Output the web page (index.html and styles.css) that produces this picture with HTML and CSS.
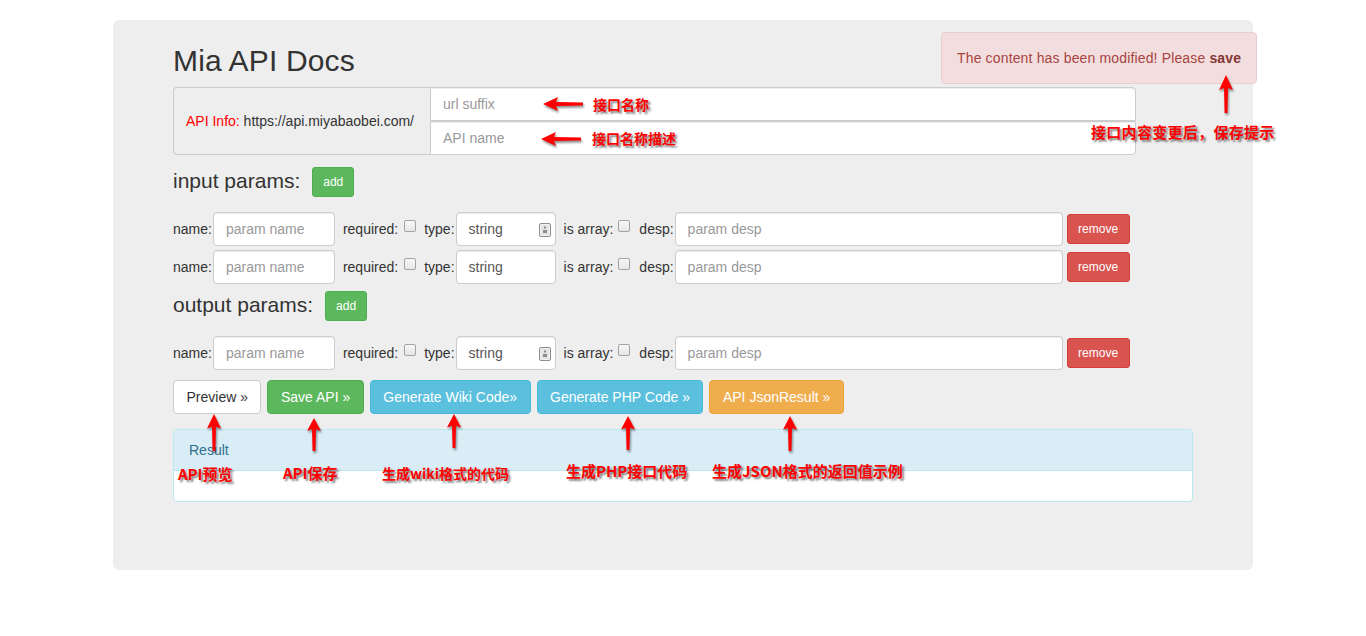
FILE: index.html
```html
<!DOCTYPE html>
<html>
<head>
<meta charset="utf-8">
<title>Mia API Docs</title>
<link rel="stylesheet" href="styles.css">
</head>
<body>
<div class="page">
  <div class="container">
    <div class="jumbotron">
      <h1 class="title">Mia API Docs</h1>
      <div class="info-group">
        <div class="info-addon"><span class="info-label">API Info:</span>&nbsp;https://api.miyabaobei.com/</div>
        <div class="info-fields">
          <input class="field field-top" placeholder="url suffix">
          <input class="field field-bottom" placeholder="API name">
        </div>
      </div>

      <div class="section-head"><h3 class="section-title">input params:</h3><button class="btn btn-sm btn-success">add</button></div>

      <div class="param-row first">
        <span class="lbl">name:</span><input class="form-control name-input" placeholder="param name">
        <span class="lbl lbl-req">required:</span><span class="check check-req"></span>
        <span class="lbl lbl-type">type:</span><div class="form-control type-select"><span>string</span><svg class="sel-icon" width="12" height="14" viewBox="0 0 12 14"><rect x="0.5" y="0.5" width="11" height="13" rx="1.5" fill="#f2f2f2" stroke="#8c8c8c"/><rect x="2" y="2" width="8" height="10" fill="#e4e4e4"/><rect x="5" y="3.5" width="2" height="2" fill="#8c8c8c"/><rect x="4" y="7" width="4" height="3" fill="#8c8c8c"/></svg></div>
        <span class="lbl lbl-arr">is array:</span><span class="check check-arr"></span>
        <span class="lbl lbl-desp">desp:</span><input class="form-control desp-input" placeholder="param desp">
        <button class="btn btn-sm btn-danger remove">remove</button>
      </div>
      <div class="param-row">
        <span class="lbl">name:</span><input class="form-control name-input" placeholder="param name">
        <span class="lbl lbl-req">required:</span><span class="check check-req"></span>
        <span class="lbl lbl-type">type:</span><div class="form-control type-select"><span>string</span></div>
        <span class="lbl lbl-arr">is array:</span><span class="check check-arr"></span>
        <span class="lbl lbl-desp">desp:</span><input class="form-control desp-input" placeholder="param desp">
        <button class="btn btn-sm btn-danger remove">remove</button>
      </div>

      <div class="section-head out-head"><h3 class="section-title">output params:</h3><button class="btn btn-sm btn-success">add</button></div>

      <div class="param-row first">
        <span class="lbl">name:</span><input class="form-control name-input" placeholder="param name">
        <span class="lbl lbl-req">required:</span><span class="check check-req"></span>
        <span class="lbl lbl-type">type:</span><div class="form-control type-select"><span>string</span><svg class="sel-icon" width="12" height="14" viewBox="0 0 12 14"><rect x="0.5" y="0.5" width="11" height="13" rx="1.5" fill="#f2f2f2" stroke="#8c8c8c"/><rect x="2" y="2" width="8" height="10" fill="#e4e4e4"/><rect x="5" y="3.5" width="2" height="2" fill="#8c8c8c"/><rect x="4" y="7" width="4" height="3" fill="#8c8c8c"/></svg></div>
        <span class="lbl lbl-arr">is array:</span><span class="check check-arr"></span>
        <span class="lbl lbl-desp">desp:</span><input class="form-control desp-input" placeholder="param desp">
        <button class="btn btn-sm btn-danger remove">remove</button>
      </div>

      <div class="actions">
        <button class="btn btn-default">Preview »</button>
        <button class="btn btn-success">Save API »</button>
        <button class="btn btn-info">Generate Wiki Code»</button>
        <button class="btn btn-info">Generate PHP Code »</button>
        <button class="btn btn-warning">API JsonResult »</button>
      </div>

      <div class="panel">
        <div class="panel-heading">Result</div>
        <div class="panel-body"></div>
      </div>
    </div>
  </div>

  <div class="alert">The content has been modified! Please <b>save</b></div>

  <!-- annotations -->
  <svg class="arrow-left a1" width="40" height="16" viewBox="0 0 40 16"><polygon points="0,8 15,1 13,6 40,6.6 40,9.4 13,10 15,15" fill="#f00"/></svg>
  <span class="note n1">接口名称</span>
  <svg class="arrow-left a2" width="40" height="16" viewBox="0 0 40 16"><polygon points="0,8 15,1 13,6 40,6.6 40,9.4 13,10 15,15" fill="#f00"/></svg>
  <span class="note n2">接口名称描述</span>

  <svg class="arrow-up u-alert" width="16" height="38" viewBox="0 0 16 38" preserveAspectRatio="none"><polygon points="8,0 15,15 10,13 9.4,38 6.6,38 6,13 1,15" fill="#f00"/></svg>
  <span class="note big n3">接口内容变更后，保存提示</span>

  <svg class="arrow-up u-prev" width="16" height="37" viewBox="0 0 16 38" preserveAspectRatio="none"><polygon points="8,0 15,15 10,13 9.4,38 6.6,38 6,13 1,15" fill="#f00"/></svg>
  <span class="note big n4">API预览</span>
  <svg class="arrow-up u-save" width="16" height="33" viewBox="0 0 16 38" preserveAspectRatio="none"><polygon points="8,0 15,15 10,13 9.4,38 6.6,38 6,13 1,15" fill="#f00"/></svg>
  <span class="note big n5">API保存</span>
  <svg class="arrow-up u-wiki" width="16" height="34" viewBox="0 0 16 38" preserveAspectRatio="none"><polygon points="8,0 15,15 10,13 9.4,38 6.6,38 6,13 1,15" fill="#f00"/></svg>
  <span class="note n6">生成wiki格式的代码</span>
  <svg class="arrow-up u-php" width="16" height="34" viewBox="0 0 16 38" preserveAspectRatio="none"><polygon points="8,0 15,15 10,13 9.4,38 6.6,38 6,13 1,15" fill="#f00"/></svg>
  <span class="note big n7">生成PHP接口代码</span>
  <svg class="arrow-up u-json" width="16" height="35" viewBox="0 0 16 38" preserveAspectRatio="none"><polygon points="8,0 15,15 10,13 9.4,38 6.6,38 6,13 1,15" fill="#f00"/></svg>
  <span class="note big n8">生成JSON格式的返回值示例</span>
</div>
</body>
</html>
```

FILE: styles.css
```css
html, body {
  margin: 0;
  padding: 0;
  background: #fff;
}
body {
  font-family: "Liberation Sans", Arial, sans-serif;
  font-size: 14px;
  color: #333;
}
.page {
  position: relative;
  width: 1366px;
  height: 636px;
  overflow: hidden;
}
.container {
  width: 1140px;
  margin: 0 auto;
  padding-top: 20px;
}
.jumbotron {
  background: #eee;
  border-radius: 6px;
  height: 550px;
  box-sizing: border-box;
  padding: 24px 60px 0;
}
.title {
  font-size: 30px;
  font-weight: 500;
  line-height: 33px;
  margin: 0 0 10px;
  color: #333;
  letter-spacing: 0.15px;
}

/* API info group */
.info-group {
  display: flex;
  width: 963px;
  height: 68px;
}
.info-addon {
  width: 257px;
  box-sizing: border-box;
  border: 1px solid #ccc;
  border-right: 0;
  border-radius: 4px 0 0 4px;
  display: flex;
  align-items: center;
  padding: 0 12px;
  background: #eee;
  white-space: nowrap;
  color: #333;
}
.info-label { color: #f00; }
.info-fields {
  flex: 1;
  display: flex;
  flex-direction: column;
}
.field {
  height: 34px;
  box-sizing: border-box;
  border: 1px solid #ccc;
  padding: 6px 12px;
  font-family: inherit;
  font-size: 14px;
  background: #fff;
  outline: none;
  box-shadow: inset 0 1px 1px rgba(0,0,0,.075);
  margin: 0;
}
.field-top { border-radius: 0 4px 0 0; }
.field-bottom { border-radius: 0 0 4px 0; }
input::placeholder { color: #999; opacity: 1; }

/* section headers */
.section-head {
  display: flex;
  align-items: center;
  gap: 12px;
  height: 30px;
  margin-top: 12px;
}
.out-head { margin-top: 7px; }
.section-title {
  font-size: 21px;
  font-weight: 500;
  line-height: 30px;
  margin: 0 0 3px;
  color: #333;
}

/* buttons */
.btn {
  font-family: inherit;
  box-sizing: border-box;
  height: 34px;
  padding: 0 12.5px;
  font-size: 14px;
  border: 1px solid transparent;
  border-radius: 4px;
  color: #fff;
  cursor: pointer;
  white-space: nowrap;
}
.btn-sm {
  height: 30px;
  padding: 0 10px;
  font-size: 12px;
  border-radius: 3px;
}
.btn-default { background: #fff; border-color: #ccc; color: #333; }
.btn-success { background: #5cb85c; border-color: #4cae4c; }
.btn-info { background: #5bc0de; border-color: #46b8da; }
.btn-warning { background: #f0ad4e; border-color: #eea236; }
.btn-danger { background: #d9534f; border-color: #d43f3a; }

/* param rows */
.param-row {
  display: flex;
  align-items: center;
  height: 34px;
  margin-top: 4px;
}
.param-row.first { margin-top: 15px; }
.lbl { white-space: nowrap; color: #333; }
.lbl-req, .lbl-type, .lbl-arr { margin-left: 8px; }
.lbl-desp { margin-left: 9px; }
.form-control {
  height: 34px;
  box-sizing: border-box;
  border: 1px solid #ccc;
  border-radius: 4px;
  padding: 6px 12px;
  font-family: inherit;
  font-size: 14px;
  color: #555;
  background: #fff;
  box-shadow: inset 0 1px 1px rgba(0,0,0,.075);
  outline: none;
  margin: 0 0 0 1px;
}
.name-input { width: 122px; }
.desp-input { width: 388px; }
.type-select {
  width: 100px;
  display: flex;
  align-items: center;
  justify-content: space-between;
  padding: 0 4px 0 12px;
}
.sel-icon { display: block; margin-top: 1px; }
.check {
  width: 12px;
  height: 12px;
  box-sizing: border-box;
  border: 1px solid #a3a3a3;
  border-radius: 2px;
  background: linear-gradient(#f7f7f7, #e6e6e6);
  align-self: flex-start;
  margin-top: 8px;
}
.check-req { margin-left: 6px; }
.check-arr { margin-left: 5px; }
.remove { margin-left: 4px; width: 63px; padding: 0; }

/* action buttons */
.actions {
  display: flex;
  gap: 6px;
  margin-top: 10px;
}

/* panel */
.panel {
  width: 1020px;
  margin-top: 15px;
  border: 1px solid #bce8f1;
  border-radius: 4px;
  background: #fff;
  box-sizing: border-box;
}
.panel-heading {
  background: #d9edf7;
  color: #31708f;
  padding: 10px 15px;
  line-height: 20px;
  border-bottom: 1px solid #bce8f1;
  border-radius: 3px 3px 0 0;
}
.panel-body { height: 30px; }

/* alert */
.alert {
  position: absolute;
  left: 941px;
  top: 32px;
  width: 316px;
  height: 52px;
  box-sizing: border-box;
  padding: 15px;
  line-height: 20px;
  background: #f2dede;
  border: 1px solid #ebccd1;
  border-radius: 4px;
  color: #a94442;
  white-space: nowrap;
  letter-spacing: 0.15px;
}
.alert b { color: #843534; }

/* annotations */
.arrow-left, .arrow-up {
  position: absolute;
  filter: drop-shadow(1px 2px 1.2px rgba(0,0,0,.45));
}
.a1 { left: 543px; top: 96px; }
.a2 { left: 541px; top: 131px; }
.u-alert { left: 1218px; top: 75px; }
.u-prev { left: 206px; top: 414px; }
.u-save { left: 306px; top: 418px; }
.u-wiki { left: 446px; top: 414px; }
.u-php { left: 620px; top: 416px; }
.u-json { left: 782px; top: 416px; }

.note {
  position: absolute;
  font-family: "Noto Sans CJK SC", "Noto Sans", sans-serif;
  font-weight: 700;
  color: #f00;
  font-size: 14px;
  line-height: 20px;
  white-space: nowrap;
  text-shadow: 2px 2px 2px rgba(0,0,0,.5);
}
.note.big { font-size: 15px; }
.n1 { left: 593px; top: 94px; }
.n2 { left: 592px; top: 128px; }
.n3 { left: 1091px; top: 122px; letter-spacing: 0.3px; }
.n4 { left: 178px; top: 464px; }
.n5 { left: 283px; top: 463px; }
.n6 { left: 382px; top: 463px; }
.n7 { left: 566px; top: 461px; }
.n8 { left: 712px; top: 461px; }
```
